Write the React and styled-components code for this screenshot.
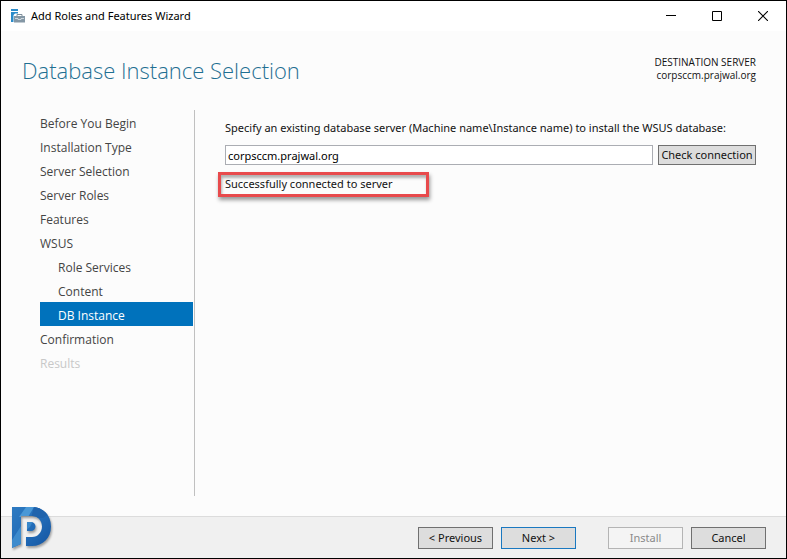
import React, { useState } from 'react'
import styled, { createGlobalStyle } from 'styled-components'

const GlobalStyle = createGlobalStyle`
* {
  box-sizing: border-box;
}

body {
  margin: 0;
  background: #fcfcfc;
  color: #111;
  font-family: "Noto Sans", "Open Sans", sans-serif;
  font-size: 11px;
  line-height: 16px;
}
`

const Window = styled.div`
  position: relative;
  display: flex;
  flex-direction: column;
  min-height: 100vh;
  border: 1px solid #000;
  background: #fcfcfc;
`

const TitleBar = styled.header`
  display: flex;
  align-items: center;
  height: 30px;
  padding-left: 9px;
  background: #fff;
`

const AppName = styled.span`
  flex: 1;
  margin-left: 5px;
  color: #000;
`

const WindowButton = styled.button`
  display: flex;
  align-items: center;
  justify-content: center;
  width: 46px;
  height: 28px;
  padding: 0;
  border: none;
  background: transparent;
`

const Heading = styled.div`
  display: flex;
  justify-content: space-between;
  align-items: flex-start;
  padding: 21px 30px 0 21px;
  height: 79px;
`

const Title = styled.h1`
  margin: 0;
  font-family: "Open Sans", "Noto Sans", sans-serif;
  font-size: 22px;
  line-height: 36px;
  font-weight: 300;
  color: #1f6f92;
`

const Destination = styled.div`
  padding-top: 4px;
  font-family: "Open Sans", "Noto Sans", sans-serif;
  font-size: 10px;
  line-height: 13px;
  text-align: right;
`

const Body = styled.div`
  flex: 1;
  display: flex;
  padding: 0 30px 20px 39px;
`

const Nav = styled.nav`
  display: flex;
  flex-direction: column;
  width: 155px;
  padding-right: 1px;
  border-right: 1px solid #c0c0c0;
`

const Step = styled.a`
  padding-top: 4px;
  padding-left: ${(props) => (props.$nested ? '18px' : '0')};
  font-family: "Open Sans", "Noto Sans", sans-serif;
  font-size: 12px;
  line-height: 20px;
  text-decoration: none;
  color: ${(props) => (props.$active ? '#fff' : props.$disabled ? '#c8c8c8' : '#444')};
  background: ${(props) => (props.$active ? '#0072bc' : 'transparent')};
`

const Main = styled.main`
  flex: 1;
  min-width: 0;
  padding: 10px 0 0 30px;
`

const Label = styled.label`
  display: block;
  color: #111;
`

const Row = styled.div`
  display: flex;
  gap: 5px;
  margin-top: 9px;
`

const Input = styled.input`
  flex: 1;
  min-width: 0;
  height: 20px;
  padding: 0 2px;
  border: 1px solid #abadb3;
  background: #fff;
  color: #000;
  font: inherit;
`

const Button = styled.button`
  width: ${(props) => props.$width || '75px'};
  height: ${(props) => props.$height || '22px'};
  padding: 0;
  border: 1px solid ${(props) => (props.$primary ? '#1a78c0' : '#707070')};
  background: #ddd;
  color: #111;
  font: inherit;
  white-space: nowrap;

  &:disabled {
    border-color: #b4b4b4;
    background: #f4f4f4;
    color: #8a8a8a;
  }
`

const Status = styled.div`
  width: 211px;
  margin: 7px 0 0 -7px;
  padding: 1px 4px 2px;
  border: 3px solid #e84a4c;
  box-shadow: 1px 3px 4px rgba(0, 0, 0, 0.4), inset 1px 3px 3px rgba(0, 0, 0, 0.3);
`

const Footer = styled.footer`
  display: flex;
  justify-content: flex-end;
  gap: 8px;
  padding: 10px 20px 9px;
  border-top: 1px solid #dcdcdc;
  background: #f0f0f0;
`

const Spacer = styled.span`
  width: 16px;
`

const Logo = styled.svg`
  position: absolute;
  left: 8px;
  bottom: 6px;
  filter: drop-shadow(1px 2px 1px rgba(0, 0, 0, 0.35));
`

const steps = [
  { name: 'Before You Begin' },
  { name: 'Installation Type' },
  { name: 'Server Selection' },
  { name: 'Server Roles' },
  { name: 'Features' },
  { name: 'WSUS' },
  { name: 'Role Services', nested: true },
  { name: 'Content', nested: true },
  { name: 'DB Instance', nested: true, active: true },
  { name: 'Confirmation' },
  { name: 'Results', disabled: true },
]

const ServerIcon = () => (
  <svg width="16" height="16" viewBox="0 0 16 16" aria-hidden="true">
    <path d="M1 1h7v2H1zM1 4h7v1.500H5L3.500 7v7H1z" fill="#2b8bc9" />
    <path d="M7 9V6.500h5V9" fill="none" stroke="#7f8f9b" />
    <path d="M4 8h11v6.500H4z" fill="#8497a5" />
    <path d="M5 10.500h3v1h3v-1h3" fill="none" stroke="#dfe6ea" strokeWidth=".8" />
  </svg>
)

const BrandLogo = () => (
  <Logo width="44" height="46" viewBox="0 0 44 46" role="img" aria-label="Prajwal">
    <defs>
      <linearGradient id="shine" x1="0" y1="0" x2="1" y2="1">
        <stop offset="0" stopColor="#2f7cc2" />
        <stop offset="0.5" stopColor="#226cb8" />
        <stop offset="1" stopColor="#12509c" />
      </linearGradient>
      <clipPath id="letters">
        <path d="M3 1H23C34 1 42 9 42 20.500S34 40 23 40H17V31H23C29 31 33 26 33 20.500S29 10 23 10H12V38L3 42Z" />
        <path d="M18 16H22A4.500 4.500 0 0 1 22 25H18Z" />
      </clipPath>
    </defs>
    <g clipPath="url(#letters)">
      <path d="M0 0h44v46H0z" fill="url(#shine)" />
      <path d="M10 11L17 1H25L19 11Z" fill="#4a98d6" />
      <path d="M3 34L12 20V38L3 42Z" fill="#3d8bcd" />
      <path d="M25 1L22 12H34L40 8V0Z" fill="#1f63ac" />
      <path d="M16 15h8l-3 6-5 4Z" fill="#3988cb" />
    </g>
  </Logo>
)

const App = () => {
  const [server, setServer] = useState('corpsccm.prajwal.org')

  return (
    <Window>
      <GlobalStyle />
      <TitleBar>
        <ServerIcon />
        <AppName>Add Roles and Features Wizard</AppName>
        <WindowButton aria-label="Minimize">
          <svg width="10" height="10" viewBox="0 0 10 10">
            <path d="M0 4.500h10" stroke="#000" />
          </svg>
        </WindowButton>
        <WindowButton aria-label="Maximize">
          <svg width="10" height="10" viewBox="0 0 10 10">
            <path d="M.5.5h9v9h-9z" fill="none" stroke="#000" />
          </svg>
        </WindowButton>
        <WindowButton aria-label="Close">
          <svg width="10" height="10" viewBox="0 0 10 10">
            <path d="M0 0l10 10M10 0L0 10" stroke="#000" strokeWidth="1.100" />
          </svg>
        </WindowButton>
      </TitleBar>

      <Heading>
        <Title>Database Instance Selection</Title>
        <Destination>
          <div>DESTINATION SERVER</div>
          <div>corpsccm.prajwal.org</div>
        </Destination>
      </Heading>

      <Body>
        <Nav>
          {steps.map((step) => (
            <Step
              key={step.name}
              href="#"
              $nested={step.nested}
              $active={step.active}
              $disabled={step.disabled}
              aria-current={step.active ? 'step' : undefined}
              aria-disabled={step.disabled}
            >
              {step.name}
            </Step>
          ))}
        </Nav>
        <Main>
          <Label htmlFor="server">
            Specify an existing database server (Machine name\Instance name) to install the WSUS database:
          </Label>
          <Row>
            <Input id="server" value={server} onChange={(e) => setServer(e.target.value)} />
            <Button $width="98px" $height="20px">Check connection</Button>
          </Row>
          <Status role="status">Successfully connected to server</Status>
        </Main>
      </Body>

      <Footer>
        <Button>&lt; Previous</Button>
        <Button $primary>Next &gt;</Button>
        <Spacer />
        <Button disabled>Install</Button>
        <Button>Cancel</Button>
      </Footer>

      <BrandLogo />
    </Window>
  )
}

export default App
